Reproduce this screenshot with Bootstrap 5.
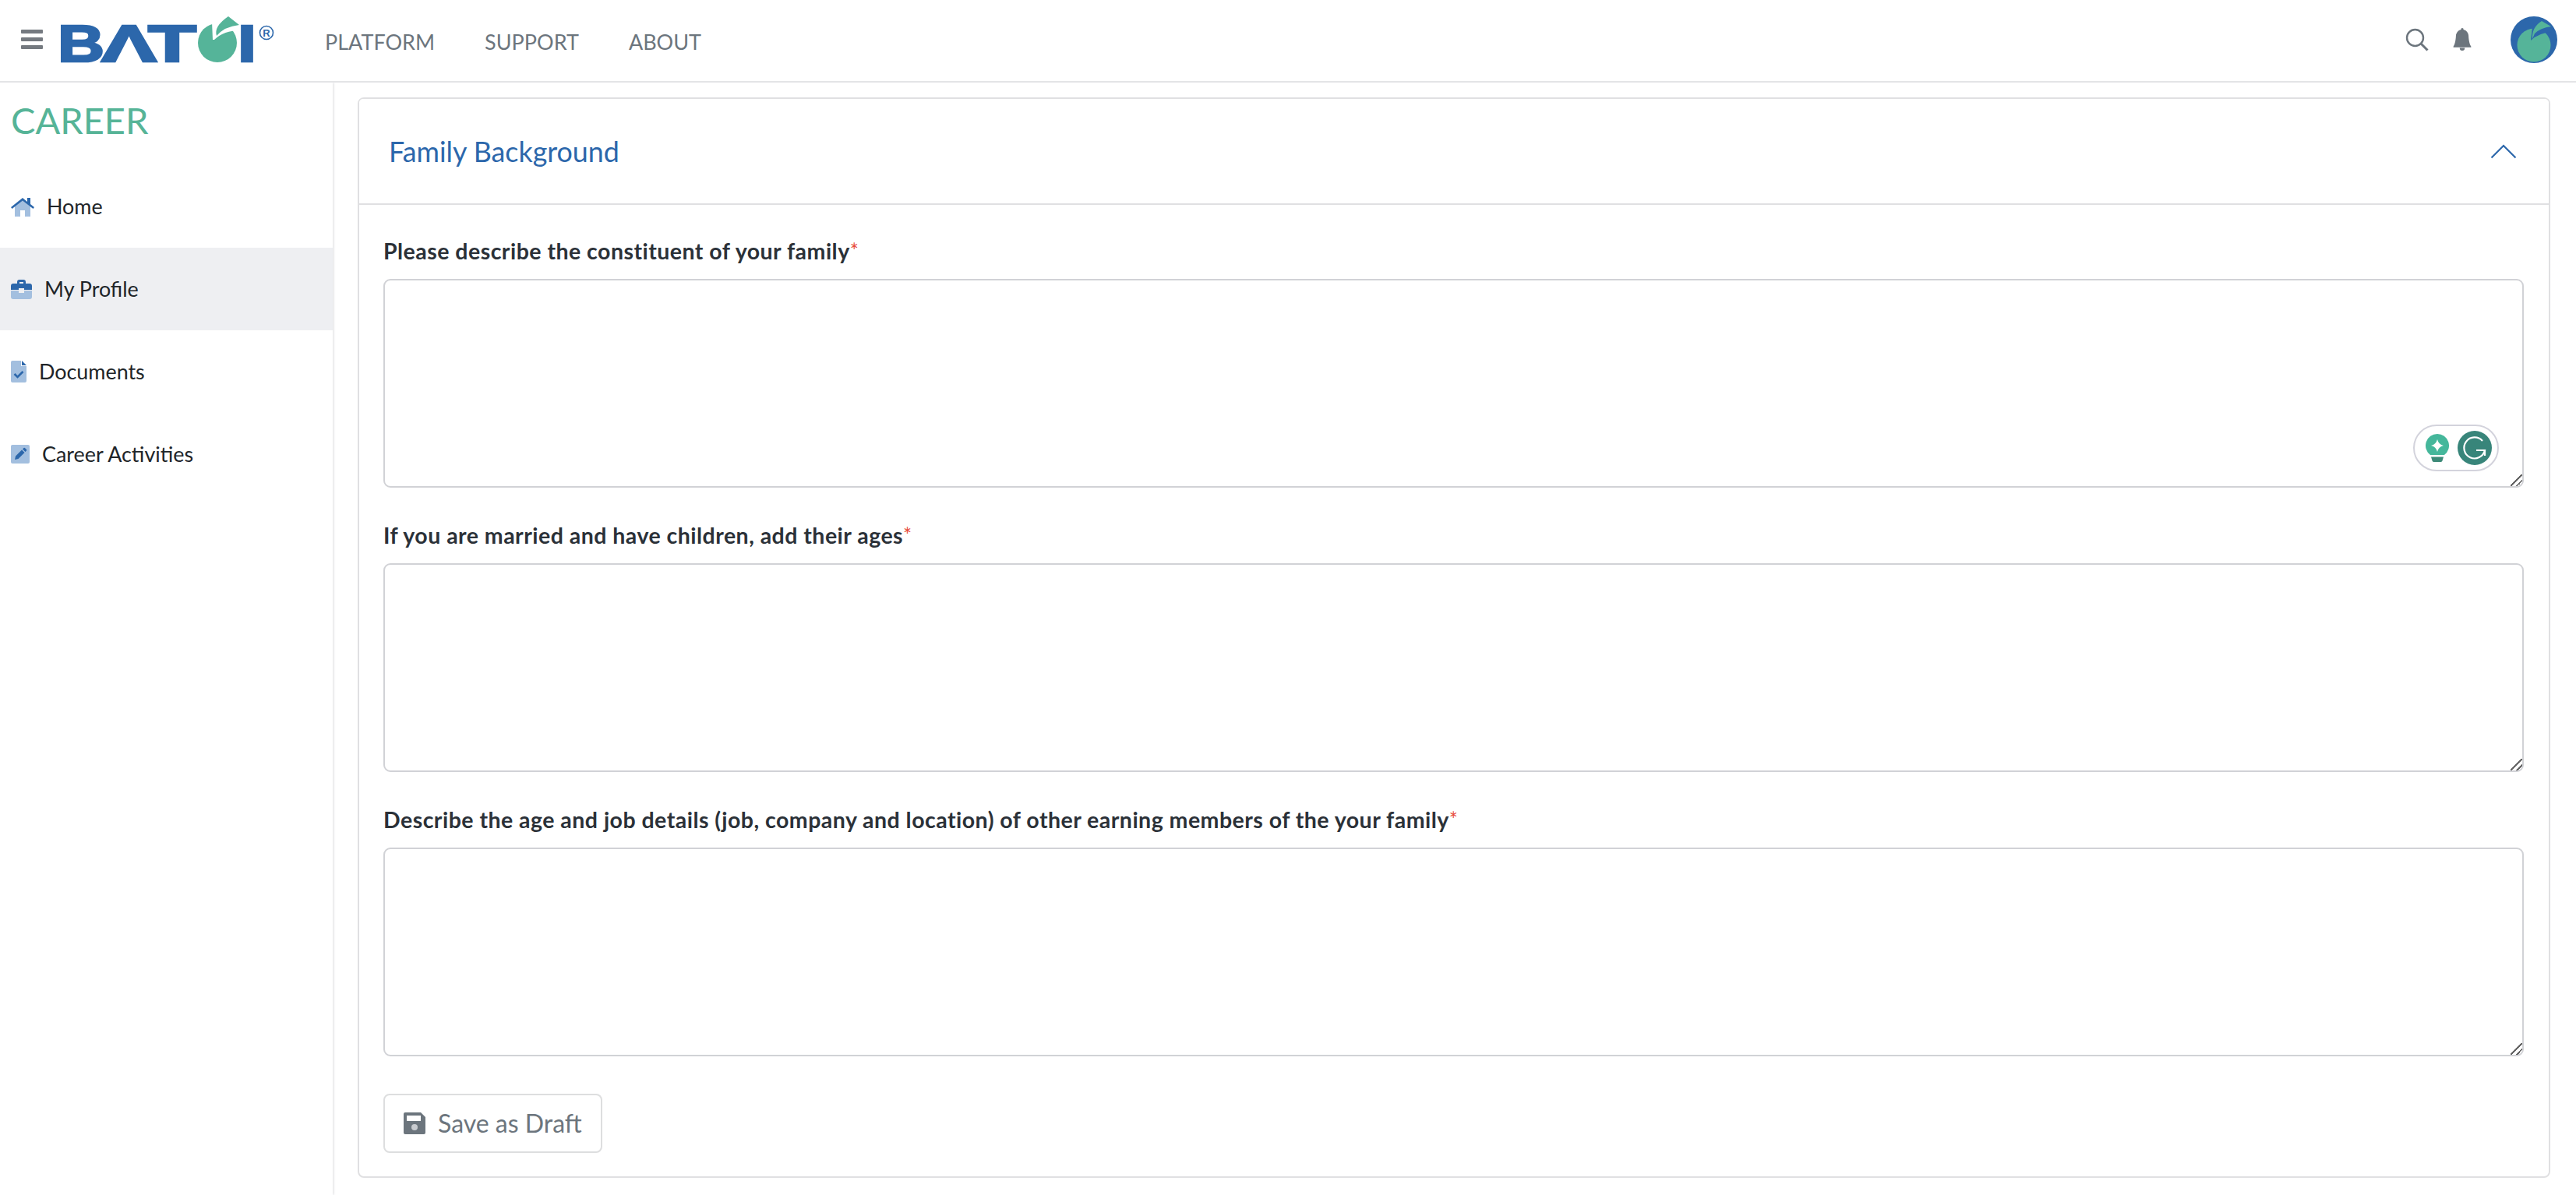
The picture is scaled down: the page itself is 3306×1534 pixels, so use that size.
<!DOCTYPE html>
<html lang="en">
<head>
<meta charset="utf-8">
<title>Career</title>
<link href="https://cdn.jsdelivr.net/npm/bootstrap@5.3.0/dist/css/bootstrap.min.css" rel="stylesheet">
<style>
html,body{height:1534px;overflow:hidden;background:#fff;font-family:"Lato","Liberation Sans",sans-serif;}
.top-bar{height:106px;border-bottom:2px solid #e3e4e6;padding:0 24px 0 27px;}
.burger{display:block;width:28px;height:25px;margin-right:22px;margin-top:-4px;}
.brand-logo{display:block;width:272px;height:64px;margin-top:-4px;overflow:visible;}
.logo-letter{font-family:"Liberation Sans",sans-serif;font-weight:700;fill:#2c67ab;stroke:#2c67ab;stroke-width:2.5px;}
.logo-reg{font-family:"Liberation Sans",sans-serif;font-weight:700;fill:#2c67ab;font-size:13px;}
.main-links{margin-left:68px;gap:64px;margin-top:4px;}
.main-links .nav-link{padding:0;color:#6c757d;font-size:27px;line-height:34px;}
.tool-icons{gap:30px;margin-top:-2px;}
.side-col{width:427px;height:1428px;flex:none;box-shadow:1px 0 3px #dcdddf;}
.side-title{color:#56b497;font-size:47px;line-height:56px;padding:20px 0 0 14px;height:106px;margin:0;font-weight:400;}
.side-links .nav-link{height:106px;padding:0 0 0 14px;gap:16px;color:#212529;font-size:26.9px;}
.side-links .nav-link.is-current{background:#eeeff2;}
.content-col{padding:19px 33px 0 32px;}
.form-panel{height:1387px;border:2px solid #e0e0e2;border-radius:8px;}
.form-panel .card-header{height:136px;background:#fff;border-bottom:2px solid #e0e0e2;padding:0 41px 0 38px;}
.panel-title{color:#2c67ab;font-size:35.8px;margin:0 0 -2px;font-weight:400;}
.form-panel .card-body{padding:0 32px 0 31px;}
.field-label{display:block;color:#2b3138;font-size:28.5px;letter-spacing:.47px;font-weight:700;line-height:34px;margin:42px 0 19px;}
.field-group + .field-group .field-label{margin-top:44px;}
.req{color:#e74c3c;font-size:26px;vertical-align:1px;font-weight:400;letter-spacing:0;}
.field-box{display:block;width:100%;height:268px;border:2px solid #d1d2d6;border-radius:9px;}
.field-box::-webkit-resizer{background:linear-gradient(135deg,transparent 0 46%,#666 46% 54%,transparent 54% 72%,#666 72% 80%,transparent 80%);}
.draft-btn{width:281px;height:76px;margin-top:48px;border:2px solid #dddedf;border-radius:8px;color:#6c757d;font-size:32px;padding:0 0 0 24px;gap:16px;background:#fff;}
.grammar-pill{position:absolute;right:32px;bottom:21px;width:110px;height:60px;border:2px solid #d3d3dc;border-radius:30px;background:#fff;padding:0 7px 0 14px;}
.bell-mark{margin-right:11px;}
</style>
</head>
<body>
<nav class="navbar top-bar d-flex align-items-center flex-nowrap">
  <div class="d-flex align-items-center">
    <svg class="burger" viewBox="0 0 28 25" aria-hidden="true"><rect y="0" width="28" height="5" rx="1" fill="#757a80"/><rect y="10" width="28" height="5" rx="1" fill="#757a80"/><rect y="20" width="28" height="5" rx="1" fill="#757a80"/></svg>
    <svg class="brand-logo" viewBox="77 16 272 64" aria-label="BATOI">
      <text class="logo-letter" x="74" y="77" font-size="66" textLength="60" lengthAdjust="spacingAndGlyphs">B</text>
      <text class="logo-letter" x="130" y="77" font-size="66" textLength="71" lengthAdjust="spacingAndGlyphs">Λ</text>
      <text class="logo-letter" x="190" y="77" font-size="66" textLength="62" lengthAdjust="spacingAndGlyphs">T</text>
      <circle cx="279" cy="53" r="25" fill="#55b499"/>
      <path d="M273 49L272 26H312V37Q288 36 275 49Z" fill="#fff"/>
      <path d="M293 19L307 30Q288 32 278 44Q274 32 293 19Z" fill="#55b499"/>
      <text class="logo-letter" x="305" y="77" font-size="66" textLength="24" lengthAdjust="spacingAndGlyphs">I</text>
      <circle cx="342" cy="40" r="8.500" fill="none" stroke="#2c67ab" stroke-width="1.600"/>
      <text class="logo-reg" x="342" y="44.500" text-anchor="middle">R</text>
    </svg>
    <ul class="nav main-links flex-nowrap">
      <li class="nav-item"><a class="nav-link" href="#">PLATFORM</a></li>
      <li class="nav-item"><a class="nav-link" href="#">SUPPORT</a></li>
      <li class="nav-item"><a class="nav-link" href="#">ABOUT</a></li>
    </ul>
  </div>
  <div class="d-flex align-items-center tool-icons">
    <svg width="30" height="30" viewBox="0 0 30 30" aria-hidden="true"><circle cx="12.500" cy="12.500" r="10.500" fill="none" stroke="#6c757d" stroke-width="2.400"/><path d="M20 20l8.500 8.500" stroke="#6c757d" stroke-width="3"/></svg>
    <svg class="bell-mark" width="26" height="30" viewBox="0 0 16 17" aria-hidden="true" preserveAspectRatio="none"><path fill="#6c757d" d="M8 16.500a2 2 0 0 0 2-2H6a2 2 0 0 0 2 2zm.995-15.400a1 1 0 1 0-1.990 0A5.002 5.002 0 0 0 3 6c0 1.098-.5 6-2 7.400v.6h14v-.6c-1.500-1.400-2-6.302-2-7.400 0-2.420-1.720-4.440-4.005-4.900z"/></svg>
    <svg class="ms-2" width="60" height="60" viewBox="0 0 60 60" aria-hidden="true"><circle cx="30" cy="30" r="30" fill="#2c67ab"/><circle cx="30" cy="37" r="21.500" fill="#55b499"/><path d="M26 31L28 13H54V20Q36 21 26 31Z" fill="#2c67ab"/><path d="M40 6L52 13Q38 15 31 22L28 29Q27 14 40 6Z" fill="#55b499"/></svg>
  </div>
</nav>
<div class="d-flex">
  <aside class="side-col">
    <h1 class="side-title">CAREER</h1>
    <nav class="nav flex-column side-links">
      <a class="nav-link d-flex align-items-center" href="#">
        <svg width="30" height="26" viewBox="0 0 30 26" aria-hidden="true"><path d="M5 12L15 4l10 8v14h-7v-8h-6v8H5z" fill="#a3bfdf"/><path d="M0 14L15 2l6 5V2h4v8l5 4-1.500 2L15 5.500 1.500 16z" fill="#2c67ab"/></svg>
        Home</a>
      <a class="nav-link d-flex align-items-center is-current" href="#">
        <svg width="27" height="25" viewBox="0 0 27 25" aria-hidden="true"><path d="M0 14h10v3h7v-3h10v8a3 3 0 0 1-3 3H3a3 3 0 0 1-3-3z" fill="#a3bfdf"/><path d="M8 5V3a3 3 0 0 1 3-3h5a3 3 0 0 1 3 3v2h5a3 3 0 0 1 3 3v5H17v-2h-7v2H0V8a3 3 0 0 1 3-3zm3 0h5V3h-5z" fill="#2c67ab"/></svg>
        My Profile</a>
      <a class="nav-link d-flex align-items-center" href="#">
        <svg width="20" height="28" viewBox="0 0 20 28" aria-hidden="true"><path d="M2 0h11v7h7v19a2 2 0 0 1-2 2H2a2 2 0 0 1-2-2V2a2 2 0 0 1 2-2z" fill="#a3bfdf"/><path d="M14 0l6 6h-6z" fill="#2c67ab"/><path d="M4.500 17l4 4 7-7" fill="none" stroke="#2c67ab" stroke-width="2.600"/></svg>
        Documents</a>
      <a class="nav-link d-flex align-items-center" href="#">
        <svg width="24" height="24" viewBox="0 0 24 24" aria-hidden="true"><rect width="24" height="24" rx="2" fill="#a3bfdf"/><path d="M5 19l1-4.500 8-8 3.500 3.500-8 8zM15 5.500l1.500-1.500a1 1 0 0 1 1.400 0l2.100 2.100a1 1 0 0 1 0 1.400L18.500 9z" fill="#2c67ab"/></svg>
        Career Activities</a>
    </nav>
  </aside>
  <main class="content-col flex-grow-1">
    <section class="card form-panel">
      <header class="card-header d-flex align-items-center justify-content-between">
        <h2 class="panel-title">Family Background</h2>
        <svg width="34" height="19" viewBox="0 0 34 19" aria-hidden="true"><path d="M1.500 17.500L17 2l15.500 15.500" fill="none" stroke="#2c67ab" stroke-width="2.200"/></svg>
      </header>
      <div class="card-body">
        <div class="field-group">
          <label class="field-label" for="q1">Please describe the constituent of your family<span class="req">*</span></label>
          <div class="position-relative">
            <textarea class="form-control field-box" id="q1"></textarea>
            <div class="grammar-pill d-flex align-items-center justify-content-between">
              <svg width="30" height="36" viewBox="0 0 30 36" aria-hidden="true"><path d="M15 0a15 15 0 0 1 9 27H6A15 15 0 0 1 15 0z" fill="#45b79b"/><path d="M15 7q1.500 6.500 8 8-6.500 1.500-8 8-1.500-6.500-8-8 6.500-1.500 8-8z" fill="#fff"/><path d="M7 29.500h16l-1.500 5a2 2 0 0 1-2 1.500h-9a2 2 0 0 1-2-1.500z" fill="#3d8a78"/></svg>
              <svg width="44" height="44" viewBox="0 0 44 44" aria-hidden="true"><circle cx="22" cy="22" r="22" fill="#38857a"/><path d="M32 13A13.500 13.500 0 1 0 35 25H24" fill="none" stroke="#fff" stroke-width="2.200"/><path d="M35 25v7M35 25h-7" fill="none" stroke="#fff" stroke-width="2.200"/></svg>
            </div>
          </div>
        </div>
        <div class="field-group">
          <label class="field-label" for="q2">If you are married and have children, add their ages<span class="req">*</span></label>
          <textarea class="form-control field-box" id="q2"></textarea>
        </div>
        <div class="field-group">
          <label class="field-label" for="q3">Describe the age and job details (job, company and location) of other earning members of the your family<span class="req">*</span></label>
          <textarea class="form-control field-box" id="q3"></textarea>
        </div>
        <button type="button" class="btn draft-btn d-flex align-items-center">
          <svg width="28" height="28" viewBox="0 0 28 28" aria-hidden="true"><path d="M2 0h20l6 6v20a2 2 0 0 1-2 2H2a2 2 0 0 1-2-2V2a2 2 0 0 1 2-2z" fill="#6c757d"/><rect x="4" y="4" width="18" height="7" fill="#fff"/><circle cx="14" cy="19" r="4" fill="#c9ccd0"/></svg>
          Save as Draft
        </button>
      </div>
    </section>
  </main>
</div>
<script src="https://cdn.jsdelivr.net/npm/bootstrap@5.3.0/dist/js/bootstrap.bundle.min.js"></script>
</body>
</html>
